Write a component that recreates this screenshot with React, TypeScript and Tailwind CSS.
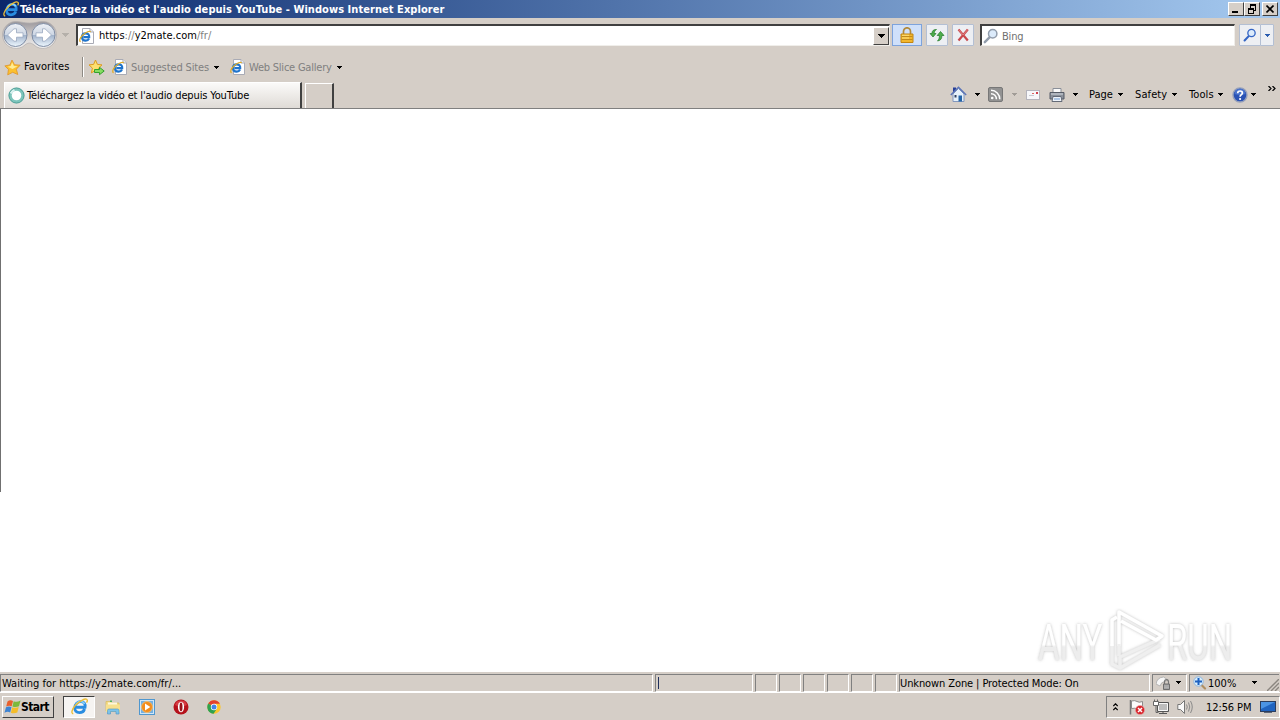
import React from 'react';
import clsx from 'clsx';

interface IconProps {
  className?: string;
}

const IeIcon = ({ className }: IconProps): React.ReactElement => (
  <svg className={clsx('shrink-0', className)} viewBox="0 0 16 16" fill="none">
    <path
      d="M12.800 10.400C12 12.800 10.400 13.800 8 13.800C5 13.800 3.400 12 3.600 9.200C3.900 5.800 6.200 3.400 9.200 3.400C12.200 3.400 13.700 5.500 13.200 8.700H5"
      stroke="#2a8ce0"
      strokeWidth="2.700"
    />
    <path
      d="M4.200 7.400C5 4.800 6.900 3.300 9 3.300C10.800 3.300 12.200 4.200 12.700 5.600"
      stroke="#8bd4fb"
      strokeWidth="1.500"
    />
    <path
      d="M2.200 15C-.2 14.400.800 10.600 4.200 6.900C7.900 2.900 13.200.2 14.700 1.200C15.600 1.800 15.300 3.300 14.600 4.400"
      stroke="#edbd35"
      strokeWidth="1.300"
    />
  </svg>
);

const IePageIcon = ({ className }: IconProps): React.ReactElement => (
  <svg className={clsx('shrink-0', className)} viewBox="0 0 16 16" fill="none">
    <path d="M3.500.5H11L14.500 4V15.500H3.500Z" fill="#fff" stroke="#a9abb5" />
    <path d="M11 .5V4H14.500" stroke="#a9abb5" fill="#e8ebf2" />
    <path
      d="M10 10.600C9.400 11.900 8.200 12.600 6.700 12.600C4.400 12.600 3 11.200 3 9C3 6.800 4.600 5.300 6.800 5.300C9.100 5.300 10.400 6.900 10.200 9.100H4.400"
      stroke="#1f74cc"
      strokeWidth="2.200"
    />
    <path
      d="M1.600 13.800C-.2 13 1 9.600 4.100 6.700C7 4 10.800 2.400 11.600 3.900"
      stroke="#e0ac28"
      strokeWidth="1.200"
    />
  </svg>
);

const StarIcon = ({ className }: IconProps): React.ReactElement => (
  <svg className={clsx('shrink-0', className)} viewBox="0 0 16 16">
    <path
      d="M7.500 1L9.900 5.400L15.200 5.800L11.600 9.600L13 14.600L8.200 12.500L3.500 14.900L4.200 9.800L.8 6.500L5.600 5.600Z"
      fill="#fcc12e"
      stroke="#e0962a"
      strokeWidth="0.800"
      strokeLinejoin="round"
    />
    <path d="M7.600 3L9.300 6.500L12.800 6.900L8 9.300L3.500 7.200L6.400 6.500Z" fill="#ffec96" />
  </svg>
);

const AddStarIcon = (): React.ReactElement => (
  <svg className="h-[17px] w-[17px] shrink-0" viewBox="0 0 17 17">
    <path
      d="M7.5 1L9.4 5.4L14 5.9L10.6 9.1L11.5 13.9L7.5 11.4L3.4 13.9L4.4 9.1L1 5.9L5.6 5.4Z"
      fill="#fde070"
      stroke="#dd9c20"
      strokeLinejoin="round"
    />
    <path
      d="M6.500 10.500H11.500V8.300L16.200 12L11.500 15.700V13.500H6.500Z"
      fill="#86dc62"
      stroke="#35a02e"
    />
  </svg>
);

const NavButtons = (): React.ReactElement => (
  <svg className="h-[30px] w-[58px] shrink-0" viewBox="0 0 58 30">
    <defs>
      <linearGradient id="nav" x1="0" y1="0" x2="0" y2="1">
        <stop offset="0" stopColor="#eef1f6" />
        <stop offset="0.48" stopColor="#ced7e4" />
        <stop offset="0.52" stopColor="#a3b4cc" />
        <stop offset="1" stopColor="#eef8ff" />
      </linearGradient>
      <linearGradient id="rim" x1="0" y1="0" x2="0" y2="1">
        <stop offset="0" stopColor="#9a979c" />
        <stop offset="0.4" stopColor="#c6c2c2" />
        <stop offset="1" stopColor="#f4f3f2" />
      </linearGradient>
    </defs>
    <path
      d="M14 1.500C20 1.500 22 3 28.500 3C35 3 36 1.500 42.500 1.500A13.500 13.500 0 1 1 33 25C30 22.500 26.500 22.500 24 25A13.500 13.500 0 1 1 14 1.500Z"
      fill="url(#rim)"
      stroke="#b5b1b1"
      strokeWidth="0.800"
    />
    {[14.5, 42.5].map((cx) => (
      <circle
        key={cx}
        cx={cx}
        cy="15"
        r="11.5"
        fill="url(#nav)"
        stroke="#7f8da5"
      />
    ))}
    <path
      d="M6.500 15L13 8.800H15.500V12.800H22V17.200H15.500V21.200H13Z"
      fill="#fff"
      stroke="#98a7bf"
      strokeWidth="0.8"
    />
    <path
      d="M50.500 15L44 8.800H41.500V12.800H35V17.200H41.500V21.200H44Z"
      fill="#fff"
      stroke="#98a7bf"
      strokeWidth="0.8"
    />
  </svg>
);

const Caret = ({ className }: IconProps): React.ReactElement => (
  <svg
    className={clsx('h-[3px] w-[5px] shrink-0', className)}
    viewBox="0 0 5 3"
    fill="currentColor"
    shapeRendering="crispEdges"
  >
    <path d="M0 0H5V1H4V2H3V3H2V2H1V1H0Z" />
  </svg>
);

// Wide arrow used by the address bar drop-downs
const WideCaret = ({ className }: IconProps): React.ReactElement => (
  <svg
    className={clsx('h-1 w-[7px] shrink-0', className)}
    viewBox="0 0 7 4"
    fill="currentColor"
    shapeRendering="crispEdges"
  >
    <path d="M0 0H7V1H6V2H5V3H4V4H3V3H2V2H1V1H0Z" />
  </svg>
);

const LockIcon = (): React.ReactElement => (
  <svg className="h-4 w-4" viewBox="0 0 16 16" fill="none">
    <path d="M4.500 8V4.500A3.300 3.500 0 0 1 11.500 4.500V8" stroke="#b28a3c" strokeWidth="1.700" />
    <path d="M2 7H14V15.500H2Z" fill="#f2b62c" stroke="#c18512" />
    <path d="M2.500 9.500H13.500M2.500 12.500H13.500" stroke="#c18a1c" />
    <path d="M3 8.300H10M3 11H10" stroke="#fde07c" />
  </svg>
);

const RefreshIcon = (): React.ReactElement => (
  <svg className="h-4 w-4" viewBox="0 0 16 16" fill="none">
    <path d="M1 6.500L4 10L7 6.500H5.200C5.200 4.500 5.800 3.600 7.500 2.500C4.500 2.300 2.900 4 2.900 6.500Z" fill="#4fae4c" stroke="#217a2a" strokeWidth="0.700" />
    <path d="M15 8.500L11.500 4.500L8.200 8.500H10.400C10.400 11 10 12.500 8.500 14C11.500 13.500 12.900 12 12.900 8.500Z" fill="#4fae4c" stroke="#217a2a" strokeWidth="0.700" />
  </svg>
);

const StopIcon = (): React.ReactElement => (
  <svg className="h-4 w-4" viewBox="0 0 16 16" fill="none">
    <path d="M3.500 2.500L12.800 13.500M12.800 2.500L3.500 13.500" stroke="#c9484c" strokeWidth="2.200" />
    <path d="M3.500 2.500L8 8L12.800 2.500" stroke="#df8284" strokeWidth="1" />
  </svg>
);

const SearchIcon = ({
  className,
  color,
}: IconProps & { color: string }): React.ReactElement => (
  <svg className={clsx('shrink-0', className)} viewBox="0 0 16 16" fill="none">
    <path d="M1.800 14.200L6.500 9.300" stroke={color} strokeWidth="2.400" strokeLinecap="round" />
    <circle cx="9.700" cy="5.700" r="4.200" fill="#dcebfb" stroke={color} strokeWidth="1.500" />
  </svg>
);

const HomeIcon = (): React.ReactElement => (
  <svg className="h-[17px] w-[17px] shrink-0" viewBox="0 0 17 17">
    <path d="M3 1.500H6V6H3Z" fill="#273f98" />
    <path d="M3 8L8.500 2.500L14 8V15.500H3Z" fill="#e6f1fb" stroke="#8297bd" />
    <path d="M.800 9L8.500 1.300L16.200 9" fill="none" stroke="#5b74b8" strokeWidth="1.400" />
    <path d="M8.500 9.500H12V15.500H8.500Z" fill="#2464a8" />
    <path d="M4.500 9H6.500V11.500H4.500Z" fill="#304060" />
  </svg>
);

const FeedIcon = (): React.ReactElement => (
  <svg className="h-[15px] w-[15px] shrink-0" viewBox="0 0 15 15" fill="none">
    <rect x=".500" y=".500" width="14" height="14" rx="1.500" fill="#929292" stroke="#777" />
    <circle cx="4.200" cy="11" r="1.300" fill="#fff" />
    <path d="M3 6.700A5.300 5.300 0 0 1 8.400 12.200M3 3.300A8.800 8.800 0 0 1 11.800 12.200" stroke="#fff" strokeWidth="1.500" />
  </svg>
);

const MailIcon = (): React.ReactElement => (
  <svg className="h-[10px] w-[14px] shrink-0" viewBox="0 0 14 10">
    <rect x=".500" y=".500" width="13" height="9" fill="#f7f7fa" stroke="#b5b4bc" />
    <path d="M10 2H12V4H10Z" fill="#cf3f4c" />
    <path d="M3 5.500H8" stroke="#c8c8d2" />
    <path d="M6 3.500H8" stroke="#d66" />
  </svg>
);

const PrinterIcon = (): React.ReactElement => (
  <svg className="h-4 w-4 shrink-0" viewBox="0 0 16 16">
    <path d="M4 1.500H12V6H4Z" fill="#fafafa" stroke="#8a8f98" />
    <path d="M1 5.500H15V12H1Z" fill="#8b919b" stroke="#555b66" />
    <path d="M2 7H14" stroke="#d4d9e0" />
    <path d="M4 9.500H12L13 14.500H3Z" fill="#eef3fa" stroke="#646b78" />
    <path d="M5 12H11" stroke="#6f9bd0" />
  </svg>
);

const HelpIcon = (): React.ReactElement => (
  <svg className="h-4 w-4 shrink-0" viewBox="0 0 16 16" fill="none">
    <circle cx="8" cy="8" r="7" fill="#2a52b4" stroke="#96a0ba" strokeWidth="1.400" />
    <path d="M2.500 7A5.500 5.500 0 0 1 13.500 7Q8 9 2.500 7Z" fill="#4a73cc" />
    <path d="M5.700 6.200C5.700 3.200 10.600 3.300 10.400 6.100C10.300 7.600 8.100 7.700 8.100 9.700" stroke="#fff" strokeWidth="1.700" />
    <circle cx="8.100" cy="12" r="1.100" fill="#fff" />
  </svg>
);

const WindowsFlag = (): React.ReactElement => (
  <svg className="h-4 w-[17px] shrink-0" viewBox="0 0 17 16">
    <path d="M3.500 2.500Q6 .500 9 2L7.700 7.200Q5 6 2.200 7.500Z" fill="#e8602c" />
    <path d="M9.700 2.300Q13 3.700 16.500 1.500L15 7.300Q11.700 8.600 8.400 7.500Z" fill="#7cb93c" />
    <path d="M2 8.200Q4.800 6.800 7.500 8L6.200 13.400Q3.500 12 .500 13.800Z" fill="#3d83d2" />
    <path d="M8.200 8.200Q11.500 9.500 14.700 8.100L13.300 13.500Q10 15 6.900 13.800Z" fill="#f5bd2a" />
  </svg>
);

const ExplorerIcon = (): React.ReactElement => (
  <svg className="h-4 w-4 shrink-0" viewBox="0 0 16 16">
    <path d="M1 2.500H6L7 4H14V12H1Z" fill="#f4dc86" stroke="#d9bb5c" strokeWidth=".700" />
    <path d="M3 3.500H12V7H3Z" fill="#fdf7da" />
    <path d="M5 1.500H7V3H5Z" fill="#53b35c" />
    <path d="M1 5.500H15V13H1Z" fill="#f7e08e" />
    <path d="M2.500 15V11.500Q2.500 10 4 10H12.500Q14 10 14 11.500V15H11V12.500H5.500V15Z" fill="#7cc3ea" stroke="#4d94c4" strokeWidth=".600" />
  </svg>
);

const MediaIcon = (): React.ReactElement => (
  <svg className="h-4 w-4 shrink-0" viewBox="0 0 16 16">
    <rect x=".500" y=".500" width="15" height="15" fill="#cfe6f7" stroke="#4f97cf" />
    <rect x="2" y="2" width="12" height="12" fill="#74b0e2" />
    <circle cx="8" cy="8" r="5.500" fill="#f28c1c" stroke="#fbc26c" strokeWidth=".800" />
    <path d="M6 4.500L11.300 8L6 11.500Z" fill="#fff" />
  </svg>
);

const OperaIcon = (): React.ReactElement => (
  <svg className="h-4 w-4 shrink-0" viewBox="0 0 16 16">
    <circle cx="8" cy="8" r="7.500" fill="#b5121b" />
    <path d="M2 6A6.300 6.300 0 0 1 14 6Q8 9 2 6Z" fill="#d63b42" />
    <ellipse cx="8" cy="8" rx="3.100" ry="5.300" fill="#fff" />
    <ellipse cx="8" cy="8" rx="1.500" ry="4.400" fill="#981018" />
  </svg>
);

const ChromeIcon = (): React.ReactElement => (
  <svg className="h-[14px] w-[14px] shrink-0" viewBox="0 0 14 14">
    <circle cx="7" cy="7" r="6.700" fill="#fcc72c" />
    <path d="M7 7L1.200 3.600A6.700 6.700 0 0 1 12.900 3.800H7Z" fill="#e2402f" />
    <path d="M7 7L1.200 3.600A6.700 6.700 0 0 0 6.600 13.700L9.800 8.700Z" fill="#2fa24f" />
    <circle cx="7" cy="7" r="3.200" fill="#fff" />
    <circle cx="7" cy="7" r="2.500" fill="#4285e8" />
  </svg>
);

const ShieldLockIcon = (): React.ReactElement => (
  <svg className="h-4 w-4 shrink-0" viewBox="0 0 16 16" fill="none">
    <path d="M0 9Q1 2.500 7.500 2L12 5L8.500 6.500Q5 7 4 11Z" fill="#f6f6f6" stroke="#a9a9a9" strokeWidth=".800" />
    <path d="M8.500 9V7A2 2.300 0 0 1 12.500 7V9" stroke="#777" strokeWidth="1.200" />
    <path d="M7.500 9H13.500V14.500H7.500Z" fill="#9a9a9a" stroke="#6f6f6f" />
    <path d="M8 11H13M8 12.800H13" stroke="#ccc" strokeWidth=".700" />
  </svg>
);

const ZoomIcon = (): React.ReactElement => (
  <svg className="h-[14px] w-[14px] shrink-0" viewBox="0 0 14 14" fill="none">
    <path d="M8 8.500L12 12.500" stroke="#b08f62" strokeWidth="2.200" strokeLinecap="round" />
    <circle cx="5.500" cy="5.500" r="4.700" fill="#d9eefc" stroke="#8db6e0" />
    <path d="M5.500 2V9M2 5.500H9" stroke="#1c60c0" strokeWidth="2" />
  </svg>
);

const FlagIcon = (): React.ReactElement => (
  <svg className="h-4 w-4 shrink-0" viewBox="0 0 16 16" fill="none">
    <path d="M1.500 1V15.500" stroke="#777" strokeWidth="1.500" />
    <path d="M2.500 2Q6 1 8 2.500T13.500 2.500V10Q11 11.300 8.500 10T2.500 9.500Z" fill="#fbfbfb" stroke="#818181" strokeWidth=".900" />
    <circle cx="11" cy="11" r="4.600" fill="#d8262c" stroke="#eba6a8" strokeWidth=".600" />
    <path d="M9 9L13 13M13 9L9 13" stroke="#fff" strokeWidth="1.500" />
  </svg>
);

const NetworkIcon = (): React.ReactElement => (
  <svg className="h-4 w-4 shrink-0" viewBox="0 0 16 16" fill="none">
    <path d="M4.500 3.500H15.500V12.500H4.500Z" fill="#bdbdbd" stroke="#555" />
    <path d="M5.500 4.500H14.500V11.500H5.500Z" stroke="#f8f8f8" />
    <path d="M6 14.500H14M10 12V14.500" stroke="#555" />
    <path d="M3 6V13.500H5.500" stroke="#666" />
    <path d="M.500 2.500H5.500V6.500H.500ZM1.500 .500V2.500M4.500 .500V2.500" fill="#fff" stroke="#666" />
  </svg>
);

const SpeakerIcon = (): React.ReactElement => (
  <svg className="h-4 w-4 shrink-0" viewBox="0 0 16 16" fill="none">
    <path d="M.800 5.500H3.500L7.500 1.500V14.500L3.500 10.500H.800Z" fill="#fafafa" stroke="#777" />
    <path d="M9.500 5.500Q11 8 9.500 10.500M11.500 3.500Q14 8 11.500 12.500M13.500 2Q17 8 13.500 14" stroke="#8a8a8a" />
  </svg>
);

const DesktopIcon = (): React.ReactElement => (
  <svg className="h-[14px] w-4 shrink-0" viewBox="0 0 16 14">
    <rect x=".500" y="1.500" width="15" height="10" fill="#2064c0" stroke="#2c3d5c" />
    <path d="M1 2H15L1 9Z" fill="#4b94e4" />
    <path d="M4 12.500H12" stroke="#5c6678" />
  </svg>
);

const Watermark = (): React.ReactElement => (
  <div className="absolute left-[1034px] top-[608px] h-[66px] w-[210px]">
    <svg className="h-[66px] w-[210px]" viewBox="-2 0 210 66" fill="none">
      <defs>
        <filter id="soft" x="-10%" y="-10%" width="120%" height="120%">
          <feDropShadow dx="0" dy="0" stdDeviation="1.500" floodColor="#999" floodOpacity=".65" />
        </filter>
        <linearGradient id="fade" x1="0" y1="0" x2="0" y2="1">
          <stop offset="0.530" stopColor="#fff" />
          <stop offset="0.570" stopColor="#ededed" />
        </linearGradient>
      </defs>
      <g filter="url(#soft)" fill="url(#fade)" className="font-['Roboto',sans-serif] text-[50px]">
        <text transform="translate(2 52) scale(.66 1)">ANY</text>
        <text transform="translate(131 52) scale(.66 1)">RUN</text>
      </g>
      <g filter="url(#soft)" strokeWidth="3.500" strokeLinejoin="round">
        <path d="M76 36V56L84 60L124 37" stroke="#efefef" />
        <path d="M84 58V49L124 31" stroke="#efefef" />
        <path d="M76 38V12L81 9" stroke="#fff" />
        <path d="M83 38V4L126 28L120 32L85 13" stroke="#fff" />
        <path d="M83 36V48" stroke="#efefef" />
      </g>
    </svg>
  </div>
);

const windowButton =
  'flex h-[14px] w-4 items-center justify-center border border-t-white border-l-white border-r-[#404040] border-b-[#404040] bg-[#d6cfc8]';

const TitleBar = (): React.ReactElement => (
  <header className="flex h-[18px] items-center bg-linear-to-r from-[#0b276b] to-[#a6caf0] pl-[3px] pr-0.5">
    <IeIcon className="h-4 w-4" />
    <h1 className="ml-px flex-1 whitespace-nowrap pt-px font-bold leading-[17px] tracking-[0.055px] text-white">
      Téléchargez la vidéo et l'audio depuis YouTube - Windows Internet Explorer
    </h1>
    <div className={windowButton}>
      <span className="mt-1.5 mr-0.5 h-0.5 w-1.5 bg-black" />
    </div>
    <div className={windowButton}>
      <svg className="h-2.5 w-2.5" viewBox="0 0 10 10" fill="none" stroke="#000" shapeRendering="crispEdges">
        <path d="M3.500 1V4M8.500 1V6M7 6.500H9M1.500 4V9M6.500 4V9M1 9.500H7" />
        <path d="M3 1H9M1 5H7" strokeWidth="2" />
      </svg>
    </div>
    <div className={clsx(windowButton, 'ml-0.5')}>
      <svg className="h-2 w-2" viewBox="0 0 8 8" stroke="#000" strokeWidth="1.600">
        <path d="M.500 .500L7.500 7.500M7.500 .500L.500 7.500" />
      </svg>
    </div>
  </header>
);

const toolButton =
  'flex h-[22px] items-center justify-center rounded-[1px] border border-[#b3bfd3] bg-[#edeff3]';

const AddressBar = (): React.ReactElement => (
  <div className="flex h-[34px] items-center pl-px">
    <NavButtons />
    <WideCaret className="ml-[3px] text-[#b5b0aa]" />
    <div className="ml-[7px] flex h-[22px] w-[814px] items-center border-t-2 border-l-2 border-r border-b border-t-[#404040] border-l-[#404040] border-r-[#f0eeea] border-b-[#f0eeea] bg-white">
      <IePageIcon className="ml-px h-4 w-4" />
      <span className="ml-1 flex-1 whitespace-nowrap pt-px tracking-[0.02px] text-[#808080]">
        <span className="text-black">https</span>://<span className="text-black">y2mate.com</span>/fr/
      </span>
      <div className="flex h-[18px] w-4 items-center justify-center border border-t-white border-l-white border-r-[#404040] border-b-[#404040] bg-[#d6cfc8]">
        <WideCaret />
      </div>
    </div>
    <div className="ml-0.5 flex h-[22px] w-[30px] items-center justify-center border border-[#7da3dc] bg-[#cfe0fa]">
      <LockIcon />
    </div>
    <div className={clsx(toolButton, 'ml-1 w-[22px]')}>
      <RefreshIcon />
    </div>
    <div className={clsx(toolButton, 'ml-1 w-[22px]')}>
      <StopIcon />
    </div>
    <div className="ml-1.5 flex h-[22px] w-[255px] items-center border-t-2 border-l-2 border-r border-b border-t-[#404040] border-l-[#404040] border-r-[#f0eeea] border-b-[#f0eeea] bg-white">
      <SearchIcon className="ml-px h-4 w-4" color="#929dac" />
      <span className="ml-[3px] mt-0.5 tracking-[-0.2px] text-[#707070]">Bing</span>
    </div>
    <div className={clsx(toolButton, 'ml-1 w-[22px]')}>
      <SearchIcon className="h-3.5 w-3.5" color="#3465c4" />
    </div>
    <div className={clsx(toolButton, '-ml-px w-3.5')}>
      <Caret className="text-[#2a5caf]" />
    </div>
  </div>
);

const FavoritesBar = (): React.ReactElement => (
  <nav className="flex h-[30px] items-center pl-1">
    <StarIcon className="h-[17px] w-[17px]" />
    <span className="ml-[3px] w-[50px] whitespace-nowrap tracking-[0.1px]">Favorites</span>
    <span className="ml-2 h-5 w-px bg-[#8d8983]" />
    <span className="mr-1 h-5 w-px bg-white" />
    <AddStarIcon />
    <IePageIcon className="ml-[7px] h-4 w-4" />
    <span className="ml-[3px] w-[79px] whitespace-nowrap pt-px tracking-[-0.12px] text-[#808080]">Suggested Sites</span>
    <Caret className="ml-1" />
    <IePageIcon className="ml-[11px] h-4 w-4" />
    <span className="ml-[3px] w-[83px] whitespace-nowrap pt-px tracking-[-0.22px] text-[#808080]">Web Slice Gallery</span>
    <Caret className="ml-[5px]" />
  </nav>
);

const TabBar = (): React.ReactElement => (
  <div className="flex h-[27px] items-end border-b border-[#808080] pl-1">
    <div className="flex h-[26px] w-[298px] items-center border-t border-l border-r-2 border-t-white border-l-white border-r-[#404040] bg-linear-to-b from-[#fbfaf9] to-[#dfdbd6] pl-[3px]">
      <svg className="h-[17px] w-[17px] shrink-0" viewBox="0 0 17 17" fill="none">
        <circle cx="8.500" cy="8.500" r="6.300" fill="#fff" stroke="#7cc4bb" strokeWidth="3" />
        <path d="M3 6.500A6 6 0 0 1 6.500 3" stroke="#d8f1ef" strokeWidth="2.400" />
        <circle cx="8.500" cy="8.500" r="7.600" stroke="#46978f" strokeWidth="0.800" />
      </svg>
      <span className="ml-0.5 whitespace-nowrap pt-px tracking-[-0.14px]">
        Téléchargez la vidéo et l'audio depuis YouTube
      </span>
    </div>
    <div className="ml-[3px] h-[25px] w-[29px] border-t border-l border-r-2 border-t-white border-l-white border-r-[#404040]" />
    <div className="ml-[616px] flex h-[27px] items-center">
      <HomeIcon />
      <Caret className="ml-2" />
      <span className="ml-2" />
      <FeedIcon />
      <Caret className="ml-[9px] text-[#a19c97]" />
      <span className="ml-[9px]" />
      <MailIcon />
      <span className="ml-[9px]" />
      <PrinterIcon />
      <Caret className="ml-2" />
      <span className="ml-[11px] w-[25px] whitespace-nowrap">Page</span>
      <Caret className="ml-1" />
      <span className="ml-3 w-[33px] whitespace-nowrap tracking-[0.1px]">Safety</span>
      <Caret className="ml-1" />
      <span className="ml-3 w-[26px] whitespace-nowrap tracking-[0.1px]">Tools</span>
      <Caret className="ml-[3px]" />
      <span className="ml-[9px]" />
      <HelpIcon />
      <Caret className="ml-[3px]" />
      <svg className="mb-3 ml-3 h-[5px] w-2" viewBox="0 0 8 5" fill="none" stroke="#000" strokeWidth="1.200">
        <path d="M.500 0L3 2.500L.500 5M4.500 0L7 2.500L4.500 5" />
      </svg>
    </div>
  </div>
);

const sunken =
  'flex h-[18px] shrink-0 items-center border border-t-[#808080] border-l-[#808080] border-r-white border-b-white';

const StatusBar = (): React.ReactElement => (
  <div className="flex h-[21px] items-center gap-0.5 border-b border-white pt-px">
    <div className={clsx(sunken, 'w-[653px]')}>
      <span className="ml-px whitespace-nowrap pt-0.5 tracking-[0.03px]">Waiting for https://y2mate.com/fr/...</span>
    </div>
    <div className={clsx(sunken, 'w-[98px] pl-0.5')}>
      <span className="h-3 w-px bg-[#20305c]" />
    </div>
    {[0, 1, 2, 3, 4, 5].map((pane) => (
      <div key={pane} className={clsx(sunken, 'w-[22px]')} />
    ))}
    <div className={clsx(sunken, 'w-[251px]')}>
      <span className="whitespace-nowrap pt-0.5 tracking-[-0.1px]">Unknown Zone | Protected Mode: On</span>
    </div>
    <div className={clsx(sunken, 'w-[35px] pl-[3px]')}>
      <ShieldLockIcon />
      <Caret className="ml-1" />
    </div>
    <div className={clsx(sunken, 'w-[90px] border-r-0 pl-[3px]')}>
      <ZoomIcon />
      <span className="ml-px w-[31px] whitespace-nowrap pt-0.5">100%</span>
      <Caret className="ml-[13px]" />
      <svg className="ml-2.5 mt-1 h-3 w-3" viewBox="0 0 12 12" stroke="#8b8680" strokeWidth="1.400">
        <path d="M0 12L12 0M4 12L12 4M8 12L12 8" />
      </svg>
    </div>
  </div>
);

const Taskbar = (): React.ReactElement => (
  <footer className="flex h-[27px] items-center pl-0.5">
    <button className="flex h-[22px] w-[52px] items-center border border-t-white border-l-white border-r-[#404040] border-b-[#404040] pl-px font-bold">
      <WindowsFlag />
      <span className="text-[12px] tracking-[-0.6px]">Start</span>
    </button>
    <div className="ml-[9px] flex h-[22px] w-8 items-center justify-center border border-t-[#404040] border-l-[#404040] border-r-white border-b-white bg-[#f6f4f2]">
      <IeIcon className="h-[17px] w-[17px]" />
    </div>
    <div className="ml-2.5 flex flex-1 items-center gap-[18px]">
      <ExplorerIcon />
      <MediaIcon />
      <OperaIcon />
      <ChromeIcon />
    </div>
    <div className="flex h-[22px] w-[174px] items-center border border-t-[#808080] border-l-[#808080] border-r-white border-b-white pl-1.5">
      <svg className="h-2 w-[5px]" viewBox="0 0 5 8" fill="none" stroke="#000" strokeWidth="1.200">
        <path d="M.300 3L2.500 .800L4.700 3M.300 7L2.500 4.800L4.700 7" />
      </svg>
      <div className="ml-[11px] flex gap-2">
        <FlagIcon />
        <NetworkIcon />
        <SpeakerIcon />
      </div>
      <span className="ml-[13px] w-[46px] whitespace-nowrap pt-0.5 tracking-[-0.1px]">12:56 PM</span>
      <span className="ml-2" />
      <DesktopIcon />
    </div>
  </footer>
);

const App = (): React.ReactElement => (
  <div className="relative flex h-[720px] w-[1280px] flex-col overflow-hidden bg-[#d5cec7] font-['DejaVu_Sans_Condensed','DejaVu_Sans',sans-serif] text-[11px] leading-[14px] text-black">
    <TitleBar />
    <AddressBar />
    <FavoritesBar />
    <TabBar />
    <main className="flex-1 bg-white">
      <div className="h-[383px] w-px bg-[#707070]" />
    </main>
    <StatusBar />
    <Taskbar />
    <Watermark />
  </div>
);

export default App;
